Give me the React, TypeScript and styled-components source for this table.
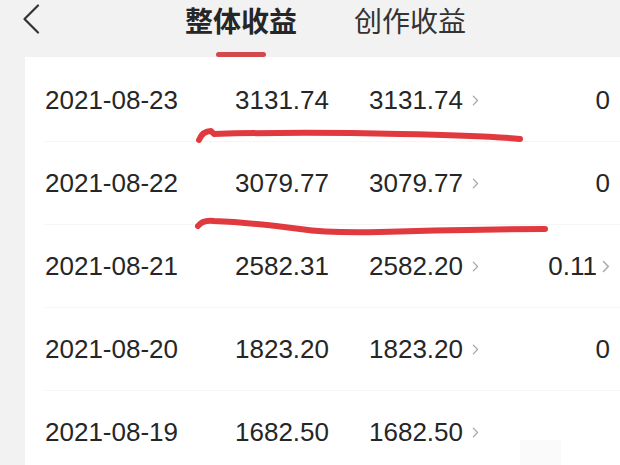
import React from "react";
import styled, { createGlobalStyle } from "styled-components";

const GlobalStyle = createGlobalStyle`
  html, body {
    margin: 0;
    padding: 0;
    background: #f2f2f2;
    overflow: hidden;
  }
  body {
    font-family: "Liberation Sans", "Noto Sans CJK SC", Arial, sans-serif;
    color: #222;
  }
`;

const Page = styled.div`
  position: relative;
  width: 620px;
  height: 465px;
  background: #f2f2f2;
  overflow: hidden;
`;

const Header = styled.header`
  display: flex;
  align-items: flex-start;
  height: 57px;
  padding-left: 22px;
  box-sizing: border-box;
`;

const BackButton = styled.button`
  width: 18px;
  height: 30px;
  margin-top: 4px;
  padding: 0;
  border: none;
  background: transparent;
  display: flex;
  align-items: center;
  justify-content: center;
`;

const Tabs = styled.nav`
  display: flex;
  gap: 57px;
  margin-left: 145px;
`;

const Tab = styled.div<{ $active?: boolean }>`
  display: flex;
  flex-direction: column;
  align-items: center;
  font-family: "Noto Sans CJK SC", "Liberation Sans", sans-serif;
  font-size: 28px;
  line-height: 40px;
  font-weight: ${(p) => (p.$active ? 700 : 400)};
  color: ${(p) => (p.$active ? "#262626" : "#333")};
`;

const Underline = styled.span`
  display: block;
  width: 50px;
  height: 5px;
  margin-top: 12px;
  border-radius: 3px;
  background: #d2494e;
`;

const Panel = styled.section`
  margin-left: 25px;
  padding-top: 2px;
  background: #fff;
  height: 420px;
`;

const Row = styled.div`
  display: grid;
  grid-template-columns: 160px 124px 134px 16px 131px;
  align-items: center;
  height: 83px;
  margin-left: 20px;
  border-bottom: 1px solid #f5f5f5;
  box-sizing: border-box;
  font-size: 26px;
  color: #262626;
  &:last-child {
    border-bottom: none;
  }
`;

const DateCell = styled.div`
  text-align: left;
`;

const NumCell = styled.div`
  text-align: right;
`;

const ArrowCell = styled.div`
  display: flex;
  align-items: center;
  justify-content: flex-start;
  padding-left: 9px;
`;

const EndCell = styled.div`
  display: flex;
  align-items: center;
  justify-content: flex-end;
  gap: 5px;
`;

const Marks = styled.svg`
  position: absolute;
  left: 0;
  top: 0;
  pointer-events: none;
`;

const Ghost = styled.div`
  position: absolute;
  left: 520px;
  top: 440px;
  width: 41px;
  height: 25px;
  background: #fafafa;
`;

const Chevron = () => (
  <svg width="8" height="13" viewBox="0 0 8 13">
    <path d="M1.5 1.5 L6.3 6.5 L1.5 11.5" fill="none" stroke="#a8a8a8" strokeWidth="1.5" strokeLinecap="round" strokeLinejoin="round" />
  </svg>
);

type Item = { date: string; total: string; work: string; other?: string; otherLink?: boolean };

const rows: Item[] = [
  { date: "2021-08-23", total: "3131.74", work: "3131.74", other: "0" },
  { date: "2021-08-22", total: "3079.77", work: "3079.77", other: "0" },
  { date: "2021-08-21", total: "2582.31", work: "2582.20", other: "0.11", otherLink: true },
  { date: "2021-08-20", total: "1823.20", work: "1823.20", other: "0" },
  { date: "2021-08-19", total: "1682.50", work: "1682.50" },
];

export default function App() {
  return (
    <Page>
      <GlobalStyle />
      <Header>
        <BackButton aria-label="返回">
          <svg width="18" height="30" viewBox="0 0 18 30">
            <path d="M16 1.5 L2.5 15 L16 28.5" fill="none" stroke="#333" strokeWidth="2.2" strokeLinecap="round" strokeLinejoin="round" />
          </svg>
        </BackButton>
        <Tabs>
          <Tab $active>
            整体收益
            <Underline />
          </Tab>
          <Tab>创作收益</Tab>
        </Tabs>
      </Header>
      <Panel>
        {rows.map((r) => (
          <Row key={r.date}>
            <DateCell>{r.date}</DateCell>
            <NumCell>{r.total}</NumCell>
            <NumCell>{r.work}</NumCell>
            <ArrowCell>
              <Chevron />
            </ArrowCell>
            <EndCell>
              {r.other}
              {r.otherLink && <Chevron />}
            </EndCell>
          </Row>
        ))}
      </Panel>
      <Ghost />
      <Marks width="620" height="465" viewBox="0 0 620 465">
        <path
          d="M199 140 C201 135 205 131 211 131 L214 134 C250 133 320 132 400 134 C460 135 500 137 520 139"
          fill="none"
          stroke="#e0393e"
          strokeWidth="6"
          strokeLinecap="round"
          strokeLinejoin="round"
        />
        <path
          d="M198 226 C201 222 206 220 214 221 C240 222 270 225 300 229 C320 232 340 233 380 232 C450 230 510 229 545 229"
          fill="none"
          stroke="#e0393e"
          strokeWidth="6"
          strokeLinecap="round"
          strokeLinejoin="round"
        />
      </Marks>
    </Page>
  );
}
